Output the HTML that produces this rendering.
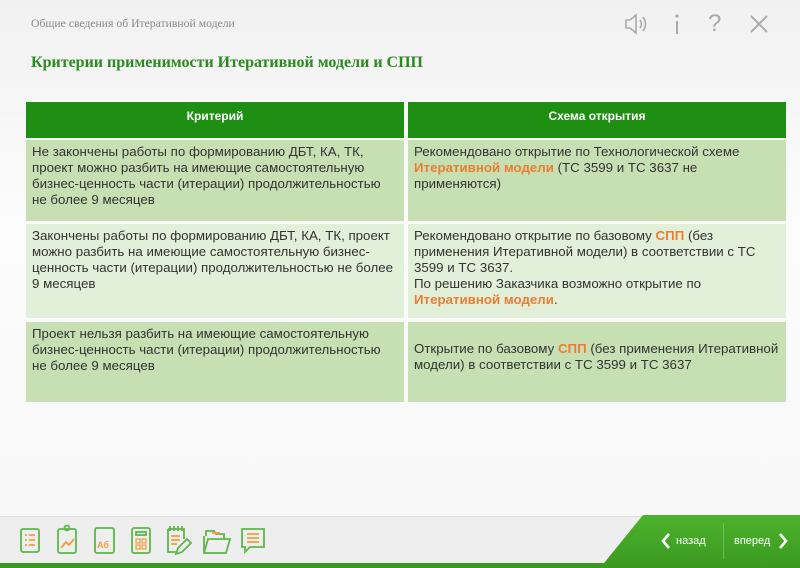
<!DOCTYPE html>
<html><head><meta charset="utf-8"><style>
*{margin:0;padding:0;box-sizing:border-box}
body{width:800px;height:568px;overflow:hidden;position:relative;background:linear-gradient(#f1f1f1,#fcfcfc 40%,#f7f7f7);font-family:"Liberation Sans",sans-serif}
.crumb{position:absolute;left:31px;top:17px;font:11.7px "Liberation Serif",serif;color:#888}
.title{position:absolute;left:31px;top:54px;font:bold 16px "Liberation Serif",serif;color:#2a8a1f}
.c{position:absolute;font-size:13.3px;line-height:16px;color:#333;padding:4px 6px;white-space:nowrap}
.h{background:#1f8f14;color:#fff;text-align:center;font-weight:bold;font-size:12px;padding-top:6px}
.d{background:#c6e0b4}.l{background:#e2efd9}
.o{color:#ed7d31;font-weight:bold}
.ico{position:absolute;top:7px;color:#aaa}
</style></head><body>
<div class="crumb">Общие сведения об Итеративной модели</div>
<div class="title">Критерии применимости Итеративной модели и СПП</div>
<svg class="ico" style="left:623px;top:12px" width="26" height="24" viewBox="0 0 26 24" fill="none" stroke="#aaa" stroke-width="1.6"><path d="M3 8h4l6-5v18l-6-5H3z"/><path d="M17 8q3 4 0 8M20 5q5 7 0 14"/></svg>
<svg class="ico" style="left:672px;top:13px" width="10" height="22"><circle cx="5" cy="3" r="1.6" fill="#aaa"/><rect x="4" y="8" width="2" height="13" fill="#aaa"/></svg>
<div class="ico" style="left:708px;top:10px;font-size:24px">?</div>
<svg class="ico" style="left:749px;top:14px" width="20" height="20" stroke="#aaa" stroke-width="2"><path d="M2 2L18 18M18 2L2 18"/></svg>

<div class="c h" style="left:26px;top:102px;width:378px;height:36px">Критерий</div>
<div class="c h" style="left:408px;top:102px;width:378px;height:36px">Схема открытия</div>
<div class="c d" style="left:26px;top:140px;width:378px;height:81px">Не закончены работы по формированию ДБТ, КА, ТК,<br>проект можно разбить на имеющие самостоятельную<br>бизнес-ценность части (итерации) продолжительностью<br>не более 9 месяцев</div>
<div class="c d" style="left:408px;top:140px;width:378px;height:81px">Рекомендовано открытие по Технологической схеме<br><span class="o">Итеративной модели</span> (ТС 3599 и ТС 3637 не<br>применяются)</div>
<div class="c l" style="left:26px;top:224px;width:378px;height:94px">Закончены работы по формированию ДБТ, КА, ТК, проект<br>можно разбить на имеющие самостоятельную бизнес-<br>ценность части (итерации) продолжительностью не более<br>9 месяцев</div>
<div class="c l" style="left:408px;top:224px;width:378px;height:94px">Рекомендовано открытие по базовому <span class="o">СПП</span> (без<br>применения Итеративной модели) в соответствии с ТС<br>3599 и ТС 3637.<br>По решению Заказчика возможно открытие по<br><span class="o">Итеративной модели</span>.</div>
<div class="c d" style="left:26px;top:322px;width:378px;height:80px">Проект нельзя разбить на имеющие самостоятельную<br>бизнес-ценность части (итерации) продолжительностью<br>не более 9 месяцев</div>
<div class="c d" style="left:408px;top:322px;width:378px;height:80px;padding-top:19px">Открытие по базовому <span class="o">СПП</span> (без применения Итеративной<br>модели) в соответствии с ТС 3599 и ТС 3637</div>

<div style="position:absolute;left:0;top:516px;width:800px;height:52px;background:#eeeeee;border-top:1px solid #ddd"></div>
<div style="position:absolute;left:0;top:563px;width:800px;height:5px;background:#3a9a20"></div>
<div style="position:absolute;left:600px;top:515px;width:200px;height:53px;background:linear-gradient(#4cb22c,#3a9a20);clip-path:polygon(43px 0,200px 0,200px 53px,0 53px)"></div>
<div style="position:absolute;left:723px;top:523px;width:1px;height:36px;background:#6cc24c"></div>
<svg style="position:absolute;left:661px;top:533px" width="10" height="16" stroke="#fff" stroke-width="2.6" fill="none"><path d="M8 1L2 8l6 7"/></svg>
<div style="position:absolute;left:676px;top:535px;color:#fff;font-size:11px">назад</div>
<div style="position:absolute;left:734px;top:535px;color:#fff;font-size:11px">вперед</div>
<svg style="position:absolute;left:778px;top:533px" width="10" height="16" stroke="#fff" stroke-width="2.6" fill="none"><path d="M2 1l6 7-6 7"/></svg>

<svg style="position:absolute;left:18px;top:524px" width="260" height="34" fill="none" stroke="#5cb84a" stroke-width="1.8">
<rect x="3" y="5" width="18" height="23" rx="2"/><path d="M7 11h2M11 11h6M7 16h2M11 16h6M7 21h2M11 21h6" stroke="#f0a040"/>
<rect x="40" y="5" width="18" height="24" rx="2"/><circle cx="49" cy="4" r="2.5"/><path d="M43 24l5-6 3 3 5-6" stroke="#f0a040"/>
<rect x="77" y="4" width="19" height="25" rx="2"/><text x="79" y="24" font-size="9" font-weight="bold" fill="#f0a040" stroke="none" font-family="Liberation Sans">Аб</text>
<rect x="114" y="4" width="18" height="25" rx="2"/><rect x="118" y="8" width="10" height="3"/><path d="M118 15h4v4h-4zM124 15h4v4h-4zM118 21h4v4h-4zM124 21h4v4h-4z" stroke="#f0a040" stroke-width="1.2"/>
<path d="M150 5h16v10M150 5v23h8M152 2v5M156 2v5M160 2v5M164 2v5"/><path d="M153 12h9M153 16h9M153 20h6" stroke="#f0a040"/><path d="M158 30l2-6 9-9 4 4-9 9z"/>
<path d="M186 12v17h22l4-14h-22l-4 14M188 12V7h8l2 3h8v5"/><path d="M194 9h8" stroke="#f0a040"/>
<path d="M224 5h22v18h-14l-5 5v-5h-3z"/><path d="M229 10h12M229 14h12M229 18h12" stroke="#f0a040"/>
</svg>
</body></html>
